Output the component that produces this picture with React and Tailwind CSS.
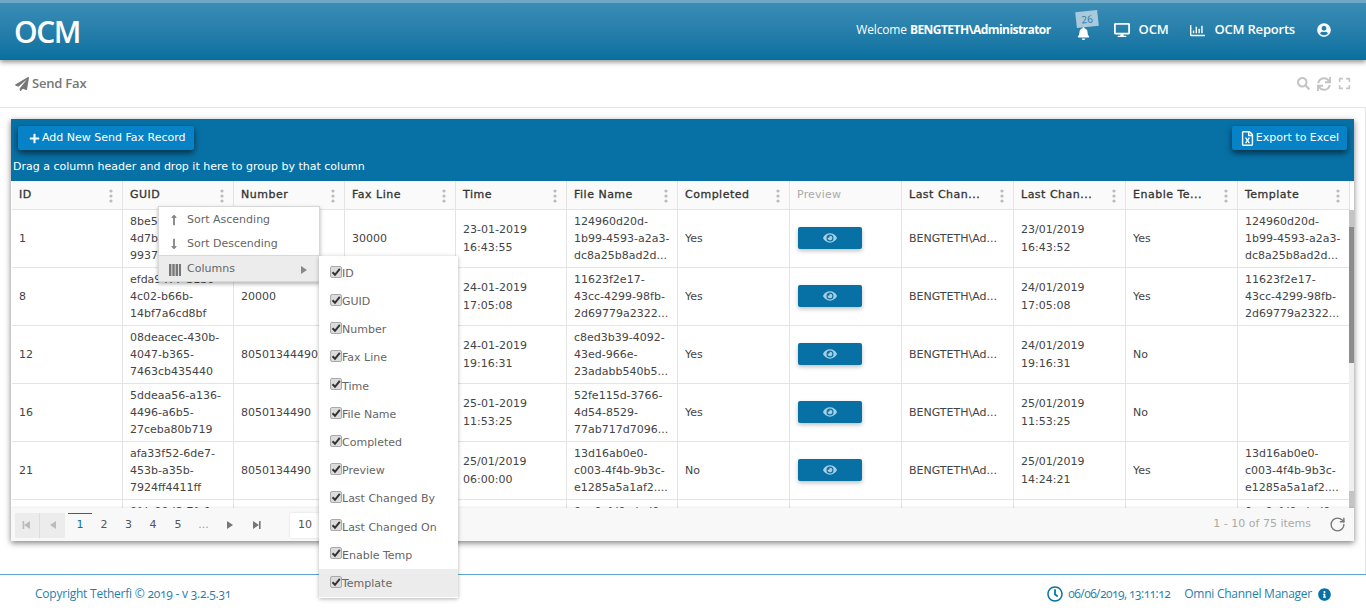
import React from "react";
import { FaPaperPlane, FaSearch, FaSync, FaExpand, FaDesktop, FaUserCircle, FaBell, FaRegClock, FaInfoCircle, FaPlus, FaEye, FaRegFileExcel, FaRegChartBar, FaLongArrowAltUp, FaLongArrowAltDown } from "react-icons/fa";
import { RotateCw } from "lucide-react";

const headers = ["ID", "GUID", "Number", "Fax Line", "Time", "File Name", "Completed", "Preview", "Last Chan...", "Last Chan...", "Enable Te...", "Template"];

const rows = [
  ["1", ["8be5a1c0-2f7e-", "4d7b-a4c1-", "99374be02d1a"], "", "30000", ["23-01-2019", "16:43:55"], ["124960d20d-", "1b99-4593-a2a3-", "dc8a25b8ad2d..."], "Yes", "BENGTETH\\Ad...", ["23/01/2019", "16:43:52"], "Yes", ["124960d20d-", "1b99-4593-a2a3-", "dc8a25b8ad2d..."]],
  ["8", ["efda9477-b1b0-", "4c02-b66b-", "14bf7a6cd8bf"], "20000", "", ["24-01-2019", "17:05:08"], ["11623f2e17-", "43cc-4299-98fb-", "2d69779a2322..."], "Yes", "BENGTETH\\Ad...", ["24/01/2019", "17:05:08"], "Yes", ["11623f2e17-", "43cc-4299-98fb-", "2d69779a2322..."]],
  ["12", ["08deacec-430b-", "4047-b365-", "7463cb435440"], "80501344490,", "", ["24-01-2019", "19:16:31"], ["c8ed3b39-4092-", "43ed-966e-", "23adabb540b5..."], "Yes", "BENGTETH\\Ad...", ["24/01/2019", "19:16:31"], "No", []],
  ["16", ["5ddeaa56-a136-", "4496-a6b5-", "27ceba80b719"], "8050134490", "", ["25-01-2019", "11:53:25"], ["52fe115d-3766-", "4d54-8529-", "77ab717d7096..."], "Yes", "BENGTETH\\Ad...", ["25/01/2019", "11:53:25"], "No", []],
  ["21", ["afa33f52-6de7-", "453b-a35b-", "7924ff4411ff"], "8050134490", "", ["25/01/2019", "06:00:00"], ["13d16ab0e0-", "c003-4f4b-9b3c-", "e1285a5a1af2...."], "No", "BENGTETH\\Ad...", ["25/01/2019", "14:24:21"], "Yes", ["13d16ab0e0-", "c003-4f4b-9b3c-", "e1285a5a1af2...."]],
  ["24", ["0fde90d8-7fa1-", "4a11-b2c2-", "aa31f0c2b1d0"], "8050134490", "", ["25/01/2019", "06:00:00"], ["0ee0cfd0cdad0-", "c003-4f4b-9b3c-", "e1285a5a1af2...."], "Yes", "BENGTETH\\Ad...", ["25/01/2019", "14:24:21"], "Yes", ["0ee0cfd0cdad0-", "c003-4f4b-9b3c-", "e1285a5a1af2...."]],
];

const cols = ["ID", "GUID", "Number", "Fax Line", "Time", "File Name", "Completed", "Preview", "Last Changed By", "Last Changed On", "Enable Temp", "Template"];

function Cell({ children }) {
  return <div className="flex flex-col justify-center px-[7px] border-r border-b border-[#e4e4e4] h-[58px] overflow-hidden leading-[17.3px] whitespace-nowrap">{children}</div>;
}
function Lines({ l }) {
  return <>{l.map((t, i) => <div key={i}>{t}</div>)}</>;
}
function Dots() {
  return (
    <svg width="4" height="14" viewBox="0 0 4 14" className="shrink-0">
      <circle cx="2" cy="2" r="1.6" fill="#bbb" />
      <circle cx="2" cy="7" r="1.6" fill="#bbb" />
      <circle cx="2" cy="12" r="1.6" fill="#bbb" />
    </svg>
  );
}
function Check() {
  return (
    <span className="flex items-center justify-center w-[12px] h-[12px] rounded-[2px] border border-[#aaa] bg-[#dcdcdc] shrink-0 mb-[5px]">
      <svg width="10" height="10" viewBox="0 0 10 10"><path d="M1.5 5.2 L4 7.8 L8.8 1.8" fill="none" stroke="#333" strokeWidth="2" /></svg>
    </span>
  );
}
function Tri({ dir = "right", color = "#777", bar }) {
  return (
    <svg width="10" height="10" viewBox="0 0 10 10">
      {dir === "right" ? <path d="M2 1 L8 5 L2 9 Z" fill={color} /> : <path d="M8 1 L2 5 L8 9 Z" fill={color} />}
      {bar && (dir === "right" ? <rect x="8" y="1" width="1.6" height="8" fill={color} /> : <rect x="0.6" y="1" width="1.6" height="8" fill={color} />)}
    </svg>
  );
}

const gridCols = "w-[1338px] ml-[1px] grid grid-cols-[repeat(6,111px)_repeat(6,112px)]";

export default function App() {
  return (
    <div className="relative w-[1366px] h-[613px] overflow-hidden bg-white text-[11px] text-[#444] font-['DejaVu_Sans',sans-serif]">
      <header className="relative z-10 h-[60px] flex items-center justify-between border-t-[3px] border-[#6fa8c7] bg-gradient-to-b from-[#3a8db5] to-[#06709f] shadow-[0_2px_5px_rgba(0,0,0,0.45)] text-white font-['Open_Sans',sans-serif]">
        <div className="pl-[14px] text-[30px] font-semibold leading-none tracking-[-1.4px]">OCM</div>
        <div className="flex items-center pr-[35px] pb-[3px]">
          <span className="text-[12px] mr-[26px] tracking-[-0.15px]">Welcome <b className="font-bold tracking-[-0.55px]">BENGTETH\Administrator</b></span>
          <span className="relative mr-[23px] w-[14px] h-[14px] flex items-end justify-center top-[3px]">
            <FaBell size={13} />
            <span className="absolute left-[-1px] top-[-15px] w-[22px] h-[16px] bg-[#a9c9dc] text-[#33799f] text-[10px] leading-[16px] text-center rotate-[-6deg]">26</span>
          </span>
          <FaDesktop size={16} className="mr-[9px]" />
          <span className="text-[13px] font-semibold mr-[22px] tracking-[-0.2px]">OCM</span>
          <FaRegChartBar size={15} className="mr-[9px]" />
          <span className="text-[13px] font-semibold mr-[22px] tracking-[-0.2px]">OCM Reports</span>
          <FaUserCircle size={14} />
        </div>
      </header>

      <div className="h-[48px] flex items-center justify-between border-b border-[#e5e5e5] pl-[15px] pr-[15px] text-[#777]">
        <div className="flex items-center gap-[3px] text-[13px] font-semibold tracking-[-0.2px] font-['Open_Sans',sans-serif]">
          <FaPaperPlane size={14} /> <span>Send Fax</span>
        </div>
        <div className="flex items-center gap-[7px] text-[#c4c4c4]">
          <FaSearch size={13} />
          <FaSync size={14} />
          <FaExpand size={13} />
        </div>
      </div>

      <main className="border-r border-[#e5e5e5] h-[466px] pt-[11px] pl-[11px]">
        <div className="relative w-[1343px] h-[422px] flex flex-col bg-white shadow-[0_2px_6px_rgba(0,0,0,0.5)]">
          <div className="h-[62px] shrink-0 bg-[#0771a6] px-[2px] text-white">
            <div className="flex justify-between pt-[7px] px-[5px]">
              <button className="flex items-center gap-[2px] h-[24px] pl-[11px] pr-[8px] bg-[#0782c6] rounded-[2px] shadow-[0_3px_6px_rgba(0,0,0,0.6)]">
                <FaPlus size={11} />Add New Send Fax Record
              </button>
              <button className="flex items-center gap-[1px] h-[24px] pl-[8px] pr-[8px] bg-[#0782c6] rounded-[2px] shadow-[0_3px_6px_rgba(0,0,0,0.6)]">
                <FaRegFileExcel size={15} />Export to Excel
              </button>
            </div>
            <div className="mt-[10px] leading-[14px]">Drag a column header and drop it here to group by that column</div>
          </div>

          <div className="relative flex-1 min-h-0 overflow-hidden">
            <div className={gridCols + " h-[29px] bg-[#fafafa] border-b border-[#e4e4e4]"}>
              {headers.map((h, i) => (
                <div key={i} className="flex items-center justify-between pl-[7px] pr-[9px] pt-[1px] border-r border-[#e4e4e4] text-[#333] text-[11px] tracking-[0.5px] [-webkit-text-stroke:0.3px_#333]">
                  <span className={i === 7 ? "text-[#aaa] [-webkit-text-stroke:0px] tracking-[0.2px]" : ""}>{h}</span>
                  {i !== 7 && <Dots />}
                </div>
              ))}
            </div>
            <div className={gridCols}>
              {rows.map((r, i) => (
                <React.Fragment key={i}>
                  <Cell>{r[0]}</Cell>
                  <Cell><Lines l={r[1]} /></Cell>
                  <Cell>{r[2]}</Cell>
                  <Cell>{r[3]}</Cell>
                  <Cell><Lines l={r[4]} /></Cell>
                  <Cell><Lines l={r[5]} /></Cell>
                  <Cell>{r[6]}</Cell>
                  <Cell>
                    <span className="flex items-center justify-center w-[64px] h-[22px] mb-[1px] bg-[#0771a6] rounded-[2px] shadow-[0_2px_4px_rgba(0,0,0,0.25)] text-[#a9cde0] ml-[1px]">
                      <FaEye size={14} />
                    </span>
                  </Cell>
                  <Cell>{r[7]}</Cell>
                  <Cell><Lines l={r[8]} /></Cell>
                  <Cell>{r[9]}</Cell>
                  <Cell><Lines l={r[10]} /></Cell>
                </React.Fragment>
              ))}
            </div>
            <div className="absolute right-0 top-[29px] bottom-0 w-[5px] bg-[#efefef]">
              <div className="h-[17px] bg-[#c4c4c4]" />
              <div className="h-[136px] bg-[#8c8c8c]" />
            </div>
            <div className="absolute right-0 bottom-[33px] w-[5px] h-[17px] bg-[#c4c4c4]" />
            <div className="absolute left-0 right-0 bottom-0 h-[33px] bg-[#f8f8f8] flex items-center justify-between shadow-[0_-1px_2px_rgba(0,0,0,0.08)]">
              <div className="flex items-center pl-[4px] pt-[1px] text-[#555]">
                <span className="flex items-center justify-center w-[25px] h-[25px] bg-[#ececec] border-r border-[#ddd]"><Tri dir="left" color="#bbb" bar /></span>
                <span className="flex items-center justify-center w-[25px] h-[25px] bg-[#ececec] mr-[3px]"><Tri dir="left" color="#bbb" /></span>
                <span className="w-[24px] h-[25px] flex items-center justify-center text-[#0771a6] border-t border-[#0771a6]">1</span>
                <span className="w-[24px] text-center">2</span>
                <span className="w-[25px] text-center">3</span>
                <span className="w-[24px] text-center">4</span>
                <span className="w-[26px] text-center">5</span>
                <span className="w-[25px] text-center text-[#999]">...</span>
                <span className="w-[28px] flex justify-center"><Tri /></span>
                <span className="w-[24px] flex justify-center"><Tri bar /></span>
                <span className="ml-[22px] w-[40px] h-[25px] bg-white rounded-[2px] flex items-center pl-[8px] shadow-[0_0_2px_rgba(0,0,0,0.15)]">10</span>
              </div>
              <div className="flex items-center pr-[8px] text-[#aaa]">
                <span className="mr-[18px]">1 - 10 of 75 items</span>
                <RotateCw size={17} strokeWidth={2} className="text-[#777]" />
              </div>
            </div>
          </div>
        </div>
      </main>

      <footer className="h-[39px] border-t border-[#5ba5cf] flex items-center justify-between pl-[35px] pr-[35px] text-[#1f7fae] text-[12px] font-['Open_Sans',sans-serif] [font-variant-numeric:oldstyle-nums]">
        <span className="tracking-[-0.23px]">Copyright Tetherfi © 2019 - v 3.2.5.31</span>
        <span className="flex items-center">
          <FaRegClock size={16} className="mr-[5px] text-[#0771a6]" />
          <span className="mr-[14px] tracking-[-0.55px]">06/06/2019, 13:11:12</span>
          <span className="mr-[6px] tracking-[-0.25px]">Omni Channel Manager</span>
          <FaInfoCircle size={13} className="text-[#0771a6]" />
        </span>
      </footer>

      <div className="absolute left-[158px] top-[206px] w-[162px] h-[76px] pt-[1px] bg-white border border-[#d8d8d8] shadow-[0_2px_4px_rgba(0,0,0,0.3)] text-[#666] flex flex-col z-20">
        <div className="h-[24px] flex items-center pl-[9px] gap-[7px]"><FaLongArrowAltUp size={12} className="text-[#888]" />Sort Ascending</div>
        <div className="h-[24px] pt-[1px] flex items-center pl-[9px] gap-[7px] border-b border-[#d8d8d8]"><FaLongArrowAltDown size={12} className="text-[#888]" />Sort Descending</div>
        <div className="flex-1 flex items-center bg-[#ececec] pl-[10px] pr-[10px] pt-[2px] relative">
          <svg width="12" height="14" viewBox="0 0 12 14" className="mr-[6px]"><path d="M0 1h2.4v12H0zM3.3 1h2.4v12H3.3zM6.6 1H9v12H6.6zM9.9 1h2.1v12H9.9z" fill="#777" /></svg>
          <span className="flex-1">Columns</span>
          <Tri color="#888" />
        </div>
      </div>

      <div className="absolute left-[319px] top-[256px] w-[139px] h-[342px] bg-white shadow-[0_1px_4px_rgba(0,0,0,0.3)] text-[#666] flex flex-col z-30 pt-[3px]">
        {cols.map((c, i) => (
          <div key={c} className={"h-[28.2px] flex items-center pl-[11px] pt-[2px] " + (i === 11 ? "bg-[#ececec]" : "")}>
            <Check />
            <span>{c}</span>
          </div>
        ))}
      </div>
    </div>
  );
}
